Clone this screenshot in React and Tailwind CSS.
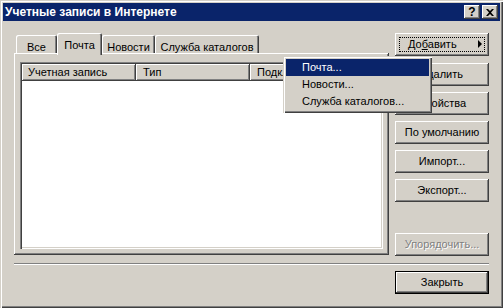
import { useState } from 'react';

const raised = 'shadow-[inset_-1px_-1px_0_#404040,inset_1px_1px_0_#ffffff,inset_-2px_-2px_0_#808080]';

const sideButtons = [
    { label: 'Удалить', mt: 'mt-[7px]' },
    { label: 'Свойства', mt: 'mt-[6px]' },
    { label: 'По умолчанию', mt: 'mt-[6px]' },
    { label: 'Импорт...', mt: 'mt-[6px]' },
    { label: 'Экспорт...', mt: 'mt-[6px]' },
];

const tabs = [
    { label: 'Все', w: 'w-[41px]' },
    { label: 'Почта', w: 'w-[45px]', active: true },
    { label: 'Новости', w: 'w-[53px]' },
    { label: 'Служба каталогов', w: 'w-[104px]' },
];

const menuItems = ['Почта...', 'Новости...', 'Служба каталогов...'];

function Button({ children, className = '' }) {
    return (
        <div className={`flex h-[23px] w-[94px] items-center justify-center bg-[#d4d0c8] ${raised} ${className}`}>
            {children}
        </div>
    );
}

function CaptionButton({ children }) {
    return (
        <div className={`flex h-[14px] w-[16px] items-center justify-center bg-[#d4d0c8] text-[12px] font-bold leading-none text-black ${raised}`}>
            {children}
        </div>
    );
}

export default function App() {
    const [active] = useState('Почта');

    return (
        <div className="relative h-[308px] w-[503px] overflow-hidden bg-[#d4d0c8] p-[3px] font-['Liberation_Sans',Arial,sans-serif] text-[11px] text-black shadow-[inset_1px_1px_0_#d4d0c8,inset_2px_2px_0_#ffffff,inset_-1px_-1px_0_#404040,inset_-2px_-2px_0_#808080]">
            {/* title bar */}
            <div className="flex h-[18px] items-center bg-[#0a246a] pl-[2px] pr-[2px]">
                <span className="flex-1 text-[12px] font-bold text-white">Учетные записи в Интернете</span>
                <div className="flex gap-[2px]">
                    <CaptionButton>?</CaptionButton>
                    <CaptionButton>
                        <svg width="8" height="7" viewBox="0 0 8 7">
                            <path d="M0 0h2l2 2 2-2h2L5 3.5 8 7H6L4 5 2 7H0l3-3.5z" fill="#000" />
                        </svg>
                    </CaptionButton>
                </div>
            </div>

            <div className="pl-[11px] pt-[12px]">
                <div className="flex">
                    {/* left: tabs + panel */}
                    <div className="w-[375px]">
                        <div className="flex h-[20px] items-end pl-[2px]">
                            {tabs.map((t) => (
                                <div
                                    key={t.label}
                                    className={
                                        t.label === active
                                            ? `relative z-10 -mb-[2px] flex h-[22px] ${t.w} items-start justify-center rounded-t-[2px] bg-[#d4d0c8] pt-[4px] shadow-[inset_1px_1px_0_#ffffff,inset_-1px_0_0_#404040,inset_-2px_0_0_#808080]`
                                            : `flex h-[18px] ${t.w} items-start justify-center rounded-t-[2px] bg-[#d4d0c8] pt-[4px] shadow-[inset_1px_1px_0_#ffffff,inset_-1px_0_0_#404040,inset_-2px_0_0_#808080]`
                                    }
                                >
                                    {t.label}
                                </div>
                            ))}
                        </div>
                        <div className={`h-[202px] w-[375px] bg-[#d4d0c8] pl-[6px] pt-[9px] ${raised}`}>
                            <div className="h-[187px] w-[363px] bg-white p-[2px] shadow-[inset_1px_1px_0_#808080,inset_2px_2px_0_#404040,inset_-1px_-1px_0_#ffffff,inset_-2px_-2px_0_#d4d0c8]">
                                <div className="flex h-[17px]">
                                    <div className={`flex w-[114px] items-center bg-[#d4d0c8] pl-[6px] ${raised}`}>Учетная запись</div>
                                    <div className={`flex w-[114px] items-center bg-[#d4d0c8] pl-[7px] ${raised}`}>Тип</div>
                                    <div className={`flex flex-1 items-center overflow-hidden whitespace-nowrap bg-[#d4d0c8] pl-[7px] ${raised}`}>Подключение</div>
                                </div>
                            </div>
                        </div>
                    </div>

                    {/* right: buttons */}
                    <div className="ml-[6px] flex flex-col">
                        <Button className="relative">
                            <div className="absolute inset-[4px] border border-dotted border-black" />
                            <span className="absolute left-[13px]">
                                До<span className="underline underline-offset-1">б</span>авить
                            </span>
                            <svg className="absolute left-[83px] top-[7px]" width="4" height="8" viewBox="0 0 4 8">
                                <path d="M0 0l4 4-4 4z" fill="#000" />
                            </svg>
                        </Button>
                        {sideButtons.map((b) => (
                            <Button key={b.label} className={b.mt}>{b.label}</Button>
                        ))}
                        <Button className="mt-[31px] text-[#808080] [text-shadow:1px_1px_0_#ffffff]">Упорядочить...</Button>
                    </div>
                </div>

                {/* separator */}
                <div className="mt-[7px] h-[2px] w-[475px] border-t border-b border-t-[#808080] border-b-white" />

                <div className="mt-[6px] flex justify-end pr-[11px]">
                    <div className="border border-black">
                        <div className={`flex h-[21px] w-[92px] items-center justify-center bg-[#d4d0c8] ${raised}`}>Закрыть</div>
                    </div>
                </div>
            </div>

            {/* popup menu */}
            <div className="absolute left-[283px] top-[56px] w-[149px] bg-[#d4d0c8] p-[3px] shadow-[inset_1px_1px_0_#d4d0c8,inset_2px_2px_0_#ffffff,inset_-1px_-1px_0_#404040,inset_-2px_-2px_0_#808080]">
                {menuItems.map((m, i) => (
                    <div
                        key={m}
                        className={i === 0 ? 'flex h-[17px] items-center bg-[#0a246a] pl-[16px] text-white' : 'flex h-[17px] items-center pl-[16px]'}
                    >
                        {m}
                    </div>
                ))}
            </div>
        </div>
    );
}
